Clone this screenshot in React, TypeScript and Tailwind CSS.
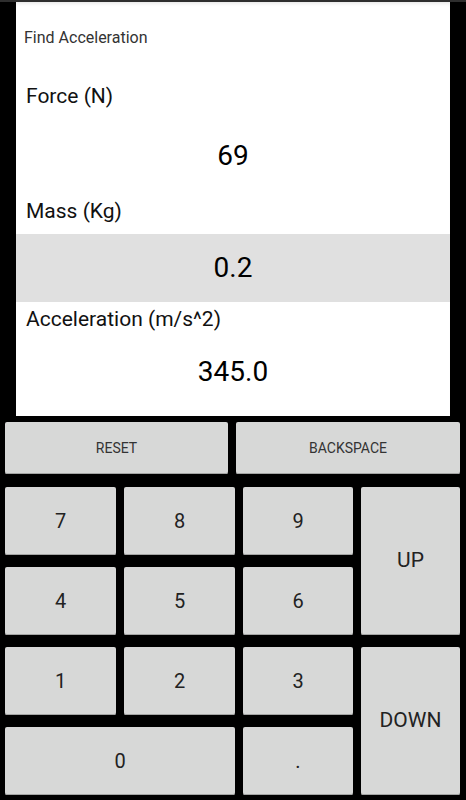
import React from 'react';

const keyBase =
  'flex items-center justify-center rounded-[2px] bg-[#d7d8d7] text-[#222] shadow-[inset_0_-1px_0_#a3a4a3]';

function Key({ label, className = '' }: { label: string; className?: string }) {
  return <button className={`${keyBase} ${className}`}>{label}</button>;
}

function App() {
  return (
    <div className="min-h-[800px] w-[466px] bg-black font-['Roboto','Liberation_Sans',sans-serif]">
      <div className="h-[2px] bg-[#2e2e2e]" />

      {/* input panel */}
      <div className="mx-[16px] h-[414px] bg-white shadow-[inset_0_4px_4px_-3px_rgba(0,0,0,0.12)]">
        <div className="flex h-[72px] items-center pl-[8px] text-[16px] text-[#333]">
          Find Acceleration
        </div>
        <div className="flex h-[46px] items-center pl-[10px] text-[21px] text-[#111]">
          Force (N)
        </div>
        <div className="flex h-[72px] items-center justify-center text-[28px] text-black">69</div>
        <div className="flex h-[40px] items-center pl-[10px] text-[21px] text-[#111]">
          Mass (Kg)
        </div>
        <div className="mt-[2px] flex h-[68px] items-center justify-center bg-[#e0e0e0] text-[28px] text-black">
          0.2
        </div>
        <div className="flex h-[36px] items-center pl-[10px] text-[21px] text-[#111]">
          Acceleration (m/s^2)
        </div>
        <div className="flex h-[68px] items-center justify-center text-[28px] text-black">345.0</div>
      </div>

      {/* action buttons */}
      <div className="mt-[6px] flex gap-[8px] pl-[5px] pr-[6px]">
        <Key label="RESET" className="h-[52px] w-[223px] text-[14px] text-[#333]" />
        <Key label="BACKSPACE" className="h-[52px] flex-1 text-[14px] text-[#333]" />
      </div>

      {/* keypad */}
      <div className="mt-[13px] grid grid-cols-[111px_111px_110px_99px] grid-rows-[68px_68px_68px_68px] gap-x-[8px] gap-y-[12px] pl-[5px] text-[20px]">
        <Key label="7" />
        <Key label="8" />
        <Key label="9" />
        <Key label="UP" className="row-span-2 text-[21px]" />
        <Key label="4" />
        <Key label="5" />
        <Key label="6" />
        <Key label="1" />
        <Key label="2" />
        <Key label="3" />
        <Key label="DOWN" className="row-span-2 text-[21px]" />
        <Key label="0" className="col-span-2" />
        <Key label="." />
      </div>
    </div>
  );
}

export default App;
